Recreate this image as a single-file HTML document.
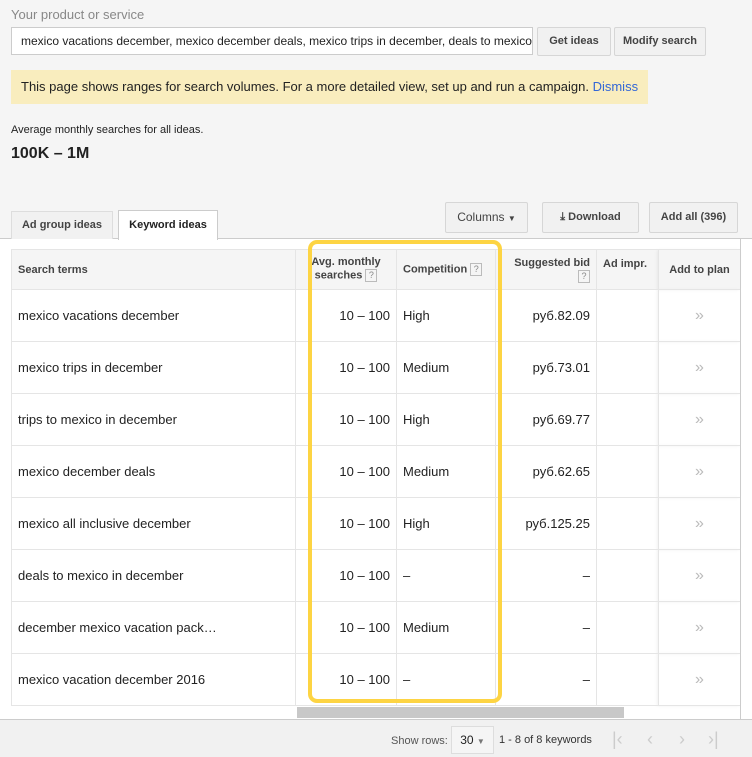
<!DOCTYPE html>
<html><head><style>
body{margin:0;width:752px;height:756px;background:#f5f5f5;font-family:"Liberation Sans",Arial,sans-serif;position:relative;overflow:hidden;color:#222}
.a{position:absolute;white-space:nowrap}
.btn{position:absolute;background:#f1f1f1;border:1px solid #d6d6d6;border-radius:2px;font-size:11px;font-weight:bold;color:#444;text-align:center;box-sizing:border-box;white-space:nowrap}
table{border-collapse:collapse;position:absolute;left:11px;top:249px;width:729px;background:#fff;font-size:13px;table-layout:fixed}
td,th{border:1px solid #e5e5e5;height:52px;padding:0 6px;box-sizing:border-box;white-space:nowrap}
th{height:40px;background:#f5f5f5;font-size:11px;font-weight:bold;color:#444;text-align:left}
.r{text-align:right}
.q{display:inline-block;width:10px;height:11px;border:1px solid #bbb;font-size:9px;color:#888;text-align:center;line-height:11px;font-weight:normal;vertical-align:middle}
.pl{color:#bbb;text-align:center;font-size:16px;border-left:1px solid #ddd;box-shadow:-2px 0 3px rgba(0,0,0,.06)}
</style></head><body>
<div class="a" style="left:11px;top:7px;font-size:13px;color:#888">Your product or service</div>
<div class="a" style="left:11px;top:27px;width:522px;height:28px;background:#fff;border:1px solid #ccc;box-sizing:border-box;font-size:12px;line-height:26px;padding-left:9px;overflow:hidden">mexico vacations december, mexico december deals, mexico trips in december, deals to mexico</div>
<div class="btn" style="left:537px;top:27px;width:74px;height:29px;line-height:27px">Get ideas</div>
<div class="btn" style="left:614px;top:27px;width:92px;height:29px;line-height:27px">Modify search</div>
<div class="a" style="left:11px;top:70px;width:637px;height:34px;background:#f9edbe;font-size:13px;line-height:34px;padding-left:10px;box-sizing:border-box">This page shows ranges for search volumes. For a more detailed view, set up and run a campaign. <span style="color:#3367d6">Dismiss</span></div>
<div class="a" style="left:11px;top:124px;font-size:11px">Average monthly searches for all ideas.</div>
<div class="a" style="left:11px;top:145px;font-size:16px;font-weight:bold">100K – 1M</div>
<div class="a" style="left:0;top:238px;width:752px;height:481px;background:#fff;border-top:1px solid #ccc"></div>
<div class="a" style="left:11px;top:211px;width:102px;height:28px;border:1px solid #ddd;border-bottom:none;box-sizing:border-box;font-size:11px;font-weight:bold;color:#444;text-align:center;line-height:26px;background:#f1f1f1">Ad group ideas</div>
<div class="a" style="left:118px;top:210px;width:100px;height:30px;border:1px solid #ccc;border-bottom:none;box-sizing:border-box;font-size:11px;font-weight:bold;color:#222;text-align:center;line-height:28px;background:#fff">Keyword ideas</div>
<div class="btn" style="left:445px;top:202px;width:83px;height:31px;line-height:29px;font-weight:normal;font-size:12px">Columns <span style="font-size:8px">▼</span></div>
<div class="btn" style="left:542px;top:202px;width:97px;height:31px;line-height:29px">⤓ Download</div>
<div class="btn" style="left:649px;top:202px;width:89px;height:31px;line-height:29px">Add all (396)</div>
<table>
<colgroup><col style="width:284px"><col style="width:101px"><col style="width:99px"><col style="width:101px"><col style="width:62px"><col style="width:82px"></colgroup>
<tr><th>Search terms</th><th style="text-align:center;line-height:13px">Avg. monthly<br>searches <span class="q">?</span></th><th>Competition <span class="q">?</span></th><th style="text-align:right;line-height:14px">Suggested bid<br><span class="q">?</span></th><th style="vertical-align:top;padding-top:8px">Ad impr.</th><th class="pl" style="color:#444;font-size:11px">Add to plan</th></tr>
<tr><td>mexico vacations december</td><td class="r">10 – 100</td><td>High</td><td class="r">руб.82.09</td><td></td><td class="pl">»</td></tr>
<tr><td>mexico trips in december</td><td class="r">10 – 100</td><td>Medium</td><td class="r">руб.73.01</td><td></td><td class="pl">»</td></tr>
<tr><td>trips to mexico in december</td><td class="r">10 – 100</td><td>High</td><td class="r">руб.69.77</td><td></td><td class="pl">»</td></tr>
<tr><td>mexico december deals</td><td class="r">10 – 100</td><td>Medium</td><td class="r">руб.62.65</td><td></td><td class="pl">»</td></tr>
<tr><td>mexico all inclusive december</td><td class="r">10 – 100</td><td>High</td><td class="r">руб.125.25</td><td></td><td class="pl">»</td></tr>
<tr><td>deals to mexico in december</td><td class="r">10 – 100</td><td>–</td><td class="r">–</td><td></td><td class="pl">»</td></tr>
<tr><td>december mexico vacation pack…</td><td class="r">10 – 100</td><td>Medium</td><td class="r">–</td><td></td><td class="pl">»</td></tr>
<tr><td>mexico vacation december 2016</td><td class="r">10 – 100</td><td>–</td><td class="r">–</td><td></td><td class="pl">»</td></tr>
</table>
<div class="a" style="left:297px;top:707px;width:327px;height:11px;background:#c8c8c8"></div>
<div class="a" style="left:740px;top:238px;width:1px;height:481px;background:#ccc"></div>
<div class="a" style="left:0;top:719px;width:752px;height:37px;background:#f1f1f1;border-top:1px solid #ccc"></div>
<div class="a" style="left:391px;top:735px;font-size:11px;color:#555">Show rows:</div>
<div class="a" style="left:451px;top:726px;width:43px;height:28px;border:1px solid #ddd;background:#f5f5f5;box-sizing:border-box;font-size:12px;line-height:26px;text-align:center">30 <span style="color:#777;font-size:8px">▼</span></div>
<div class="a" style="left:499px;top:734px;font-size:11px;color:#333">1 - 8 of 8 keywords</div>
<div class="a" style="left:612px;top:729px;font-size:18px;color:#ccc">|‹</div>
<div class="a" style="left:647px;top:729px;font-size:18px;color:#ccc">‹</div>
<div class="a" style="left:679px;top:729px;font-size:18px;color:#ccc">›</div>
<div class="a" style="left:708px;top:729px;font-size:18px;color:#ccc">›|</div>
<div class="a" style="left:308px;top:240px;width:194px;height:463px;border:4px solid #fdd443;border-radius:9px;box-sizing:border-box"></div>
</body></html>
